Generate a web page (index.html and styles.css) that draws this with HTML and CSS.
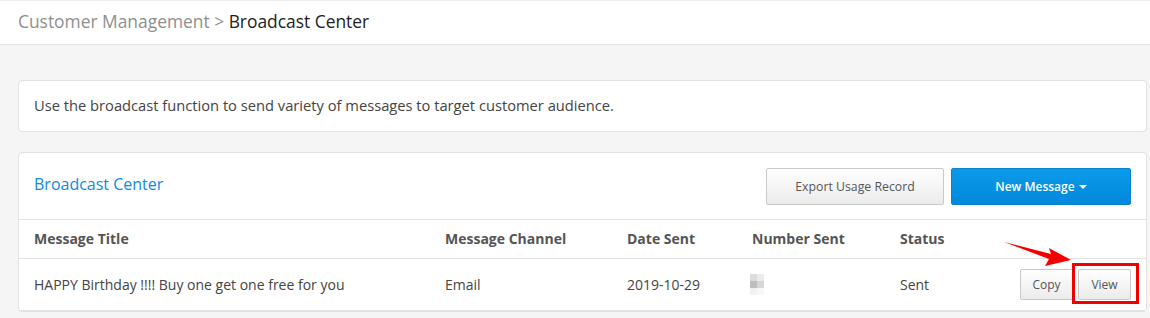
FILE: index.html
```html
<!DOCTYPE html>
<html>
<head>
<meta charset="utf-8">
<link rel="stylesheet" href="styles.css">
</head>
<body>
<header class="topbar">
  <span class="crumb-muted">Customer Management &gt;</span> <span class="crumb-current">Broadcast Center</span>
</header>
<main class="content">
  <section class="card info-card">Use the broadcast function to send variety of messages to target customer audience.</section>
  <section class="card list-card">
    <div class="list-head">
      <h2 class="list-title">Broadcast Center</h2>
      <div class="head-actions">
        <button class="btn btn-default btn-export">Export Usage Record</button>
        <button class="btn btn-primary btn-new">New Message <span class="caret"></span></button>
      </div>
    </div>
    <table class="list-table">
      <colgroup>
        <col class="c1"><col class="c2"><col class="c3"><col class="c4"><col class="c5"><col class="c6">
      </colgroup>
      <thead>
        <tr><th>Message Title</th><th>Message Channel</th><th>Date Sent</th><th>Number Sent</th><th>Status</th><th></th></tr>
      </thead>
      <tbody>
        <tr>
          <td>HAPPY Birthday !!!! Buy one get one free for you</td>
          <td>Email</td>
          <td>2019-10-29</td>
          <td><span class="blur"><i class="p1"></i><i class="p2"></i><i class="p3"></i><i class="p4"></i><i class="p5"></i><i class="p6"></i></span></td>
          <td>Sent</td>
          <td class="actions">
            <div class="action-group">
              <button class="btn btn-default btn-sm">Copy</button>
              <span class="view-wrap"><button class="btn btn-default btn-sm">View</button><span class="highlight"></span></span>
            </div>
          </td>
        </tr>
      </tbody>
    </table>
    <svg class="arrow" width="80" height="34" viewBox="0 0 80 34"><path d="M3 5 L50 17 L48 11 L70 23 L44 29 L48 22 Z" fill="#f40000"/></svg>
  </section>
</main>
</body>
</html>
```

FILE: styles.css
```css
* { box-sizing: border-box; }
html, body { margin: 0; padding: 0; }
body {
  background: #f5f5f5;
  font-family: "Open Sans", "Noto Sans", sans-serif;
  font-size: 14px;
  color: #444;
  width: 1150px;
  height: 318px;
  overflow: hidden;
}
.topbar {
  height: 45px;
  background: #fff;
  border-top: 1px solid #efefef;
  border-bottom: 1px solid #e3e3e3;
  padding: 7px 0 0 18px;
  font-size: 17.4px;
  line-height: 26px;
}
.crumb-muted { color: #8f8f8f; }
.crumb-current { color: #222; }
.content {
  padding: 35px 3px 0 18px;
}
.card {
  background: #fff;
  border: 1px solid #e2e2e2;
  border-radius: 4px;
}
.info-card {
  height: 52px;
  padding: 0 15px;
  line-height: 49px;
  font-size: 14.7px;
  color: #444;
  margin-bottom: 20px;
}
.list-card { position: relative; }
.list-head {
  height: 67px;
  display: flex;
  align-items: flex-start;
  justify-content: space-between;
  padding: 15px 15px 0 15px;
  border-bottom: 1px solid #e2e2e2;
}
.list-title {
  margin: -1px 0 0 0;
  font-size: 16px;
  font-weight: 400;
  color: #0d8be0;
  line-height: 34px;
}
.head-actions { display: flex; gap: 7px; }
.btn {
  font-family: "Open Sans", "Noto Sans", sans-serif;
  border-radius: 2px;
  cursor: pointer;
  padding: 0;
}
.btn-default {
  background: linear-gradient(#ffffff, #ebebeb);
  border: 1px solid #c9c9c9;
  color: #555;
}
.btn-export {
  width: 178px;
  height: 37px;
  font-size: 12.3px;
}
.btn-primary {
  background: linear-gradient(#0a9ae8, #0289dd);
  border: 1px solid #0a82cc;
  color: #fff;
  font-weight: 600;
  font-size: 12px;
  width: 180px;
  height: 37px;
}
.caret {
  display: inline-block;
  width: 0; height: 0;
  border-left: 4px solid transparent;
  border-right: 4px solid transparent;
  border-top: 4px solid #fff;
  vertical-align: middle;
  margin-left: 1px;
  margin-top: -2px;
}
.list-table {
  width: 100%;
  border-collapse: collapse;
  table-layout: fixed;
}
.c1 { width: 411px; }
.c2 { width: 182px; }
.c3 { width: 125px; }
.c4 { width: 148px; }
.c5 { width: 100px; }
.list-table th {
  text-align: left;
  font-weight: 700;
  color: #555;
  height: 38px;
  padding: 0 15px;
  border-bottom: 1px solid #e2e2e2;
}
.list-table td {
  height: 52px;
  padding: 0 15px;
  color: #444;
  border-bottom: 1px solid #e2e2e2;
  vertical-align: middle;
}
.action-group {
  display: flex;
  justify-content: flex-end;
  gap: 5px;
  padding-top: 1px;
}
.btn-sm {
  width: 53px;
  height: 31px;
  font-size: 12px;
  display: block;
}
.view-wrap { position: relative; display: block; }
.highlight {
  position: absolute;
  left: -6px;
  right: -8px;
  top: -6px;
  bottom: -4px;
  border: 3px solid #f10000;
}
.arrow {
  position: absolute;
  left: 982px;
  top: 84px;
}
.blur {
  display: inline-grid;
  grid-template-columns: 7px 7px;
  grid-auto-rows: 7px;
  vertical-align: middle;
  margin-left: -2px;
}
.blur i { display: block; }
.p1 { background: #dcdcdc; }
.p2 { background: #ebebeb; }
.p3 { background: #bebebe; }
.p4 { background: #d6d6d6; }
.p5 { background: #f1f1f1; }
.p6 { background: #f7f7f7; }
```
